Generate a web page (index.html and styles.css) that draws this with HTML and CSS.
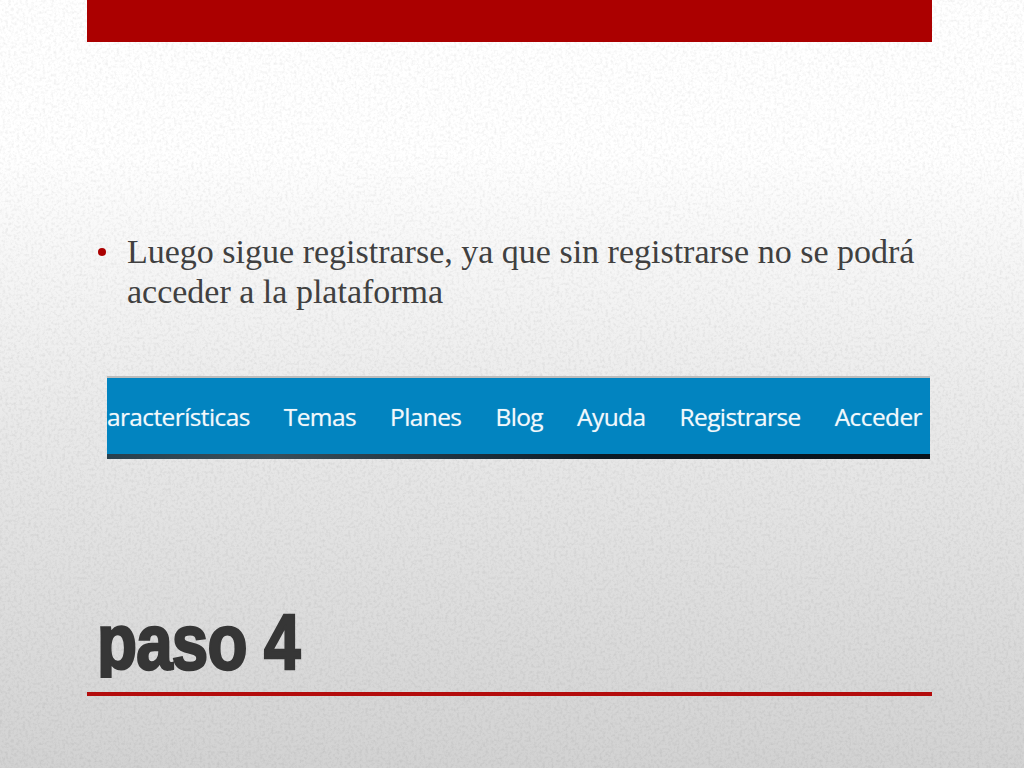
FILE: index.html
```html
<!doctype html>
<html lang="es">
  <head>
    <meta charset="UTF-8" />
    <title>paso 4</title>
    <link rel="stylesheet" href="styles.css">
  </head>
  <body>
    <svg class="paper" width="1024" height="768" aria-hidden="true">
      <filter id="grain">
        <feTurbulence type="fractalNoise" baseFrequency="0.35" numOctaves="3" seed="4" />
        <feColorMatrix type="matrix" values="0 0 0 0 0  0 0 0 0 0  0 0 0 0 0  0.9 0 0 0 -0.38" />
      </filter>
      <rect width="1024" height="768" filter="url(#grain)" opacity="0.15" />
    </svg>

    <div class="slide">
      <div class="top-bar"></div>

      <ul class="bullets">
        <li>Luego sigue registrarse, ya que sin registrarse no se podrá acceder a la plataforma</li>
      </ul>

      <div class="nav-shot">
        <div class="nav-links">
          <span>Características</span>
          <span>Temas</span>
          <span>Planes</span>
          <span>Blog</span>
          <span>Ayuda</span>
          <span>Registrarse</span>
          <span>Acceder</span>
        </div>
        <div class="nav-edge"></div>
      </div>

      <h1 class="slide-title">paso 4</h1>
      <div class="title-rule"></div>
    </div>
  </body>
</html>
```

FILE: styles.css
```css
:root {
  --red: #ab0000;
  --dark-text: #404040;
  --nav-blue: #0284c0;
}

* {
  box-sizing: border-box;
}

html,
body {
  margin: 0;
  height: 768px;
  overflow: hidden;
}

body {
  position: relative;
  background: linear-gradient(180deg, #ffffff 0%, #ffffff 20%, #e9e9e9 55%, #d2d2d2 100%);
}

.paper {
  position: absolute;
  top: 0;
  left: 0;
}

.slide {
  position: relative;
  width: 845px;
  height: 768px;
  margin-left: 87px;
  display: flex;
  flex-direction: column;
}

.top-bar {
  height: 42px;
  background: var(--red);
}

.bullets {
  list-style: none;
  margin: 190px 0 0;
  padding: 0 10px 0 40px;
  font-family: "Liberation Serif", serif;
  font-size: 34px;
  line-height: 40px;
  color: var(--dark-text);
}

.bullets li {
  position: relative;
}

.bullets li::before {
  content: "";
  position: absolute;
  left: -29px;
  top: 16px;
  width: 8px;
  height: 8px;
  border-radius: 50%;
  background: var(--red);
}

.nav-shot {
  width: 823px;
  height: 83px;
  margin: 64px 0 0 20px;
  background: var(--nav-blue);
  border-top: 2px solid #bcbcbc;
  display: flex;
  flex-direction: column;
  overflow: hidden;
}

.nav-links {
  flex: 1;
  display: flex;
  justify-content: flex-end;
  align-items: center;
  gap: 34px;
  padding-right: 8px;
  font-family: "Open Sans", sans-serif;
  font-size: 24.5px;
  letter-spacing: -0.6px;
  white-space: nowrap;
  color: #f2f8fb;
  text-shadow: 0 0 1px rgba(255, 255, 255, 0.5);
}

.nav-edge {
  height: 5px;
  background: linear-gradient(90deg, #28404e 0%, #3a4f5a 20%, #1c2f3c 45%, #0c1b26 60%, #08121a 100%);
}

.slide-title {
  margin: 143px 0 0 10px;
  height: 80px;
  font-family: "Liberation Sans", sans-serif;
  font-size: 78px;
  line-height: 80px;
  font-weight: 700;
  letter-spacing: -1px;
  color: #363636;
  -webkit-text-stroke: 2.5px #363636;
  transform: scaleX(0.84);
  transform-origin: left center;
  clip-path: inset(0 0 4px 0);
}

.title-rule {
  height: 4px;
  margin-top: 10px;
  background: #b30c0c;
}
```
